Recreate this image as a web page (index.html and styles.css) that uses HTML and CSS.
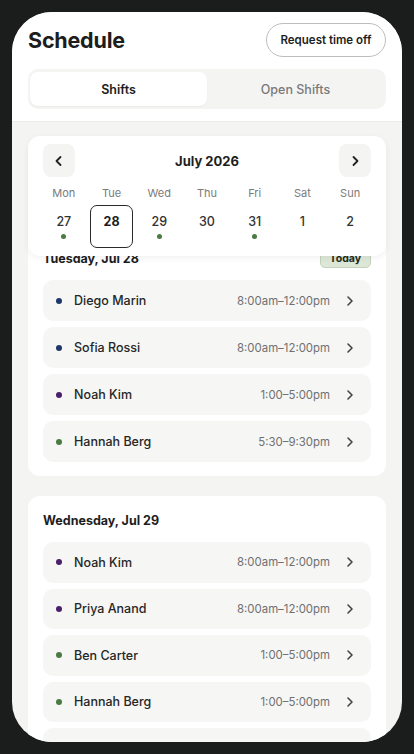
FILE: index.html
```html
<!DOCTYPE html>
<html lang="en">
<head>
    <meta charset="utf-8">
    <link rel="stylesheet" href="styles.css">
</head>
<body>
<div class="phone">
    <header class="top">
        <div class="top-row">
            <h1>Schedule</h1>
            <button class="pill-btn">Request time off</button>
        </div>
        <div class="tabs">
            <button class="tab active">Shifts</button>
            <button class="tab">Open Shifts</button>
        </div>
    </header>
    <main class="feed">
        <section class="calendar">
            <div class="cal-nav">
                <button class="nav-btn">
                    <svg width="12" height="12" viewBox="0 0 12 12"><polyline points="7.5,2 3.5,6 7.5,10" fill="none" stroke="#222" stroke-width="1.8" stroke-linecap="round" stroke-linejoin="round"/></svg>
                </button>
                <div class="cal-title">July 2026</div>
                <button class="nav-btn">
                    <svg width="12" height="12" viewBox="0 0 12 12"><polyline points="4.5,2 8.5,6 4.5,10" fill="none" stroke="#222" stroke-width="1.8" stroke-linecap="round" stroke-linejoin="round"/></svg>
                </button>
            </div>
            <div class="week">
                <span>Mon</span><span>Tue</span><span>Wed</span><span>Thu</span><span>Fri</span><span>Sat</span><span>Sun</span>
            </div>
            <div class="days">
                <div class="day-cell"><span class="num">27</span><span class="mark"></span></div>
                <div class="day-cell selected"><span class="num">28</span></div>
                <div class="day-cell"><span class="num">29</span><span class="mark"></span></div>
                <div class="day-cell"><span class="num">30</span></div>
                <div class="day-cell"><span class="num">31</span><span class="mark"></span></div>
                <div class="day-cell"><span class="num">1</span></div>
                <div class="day-cell"><span class="num">2</span></div>
            </div>
        </section>

        <section class="day">
            <div class="day-head">
                <h2>Tuesday, Jul 28</h2>
                <span class="badge">Today</span>
            </div>
            <div class="shift"><span class="dot navy"></span><span class="name">Diego Marin</span><span class="time">8:00am–12:00pm</span><svg class="chev" width="10" height="12" viewBox="0 0 10 12"><polyline points="3,2 7,6 3,10" fill="none" stroke="#444" stroke-width="1.6" stroke-linecap="round" stroke-linejoin="round"/></svg></div>
            <div class="shift"><span class="dot navy"></span><span class="name">Sofia Rossi</span><span class="time">8:00am–12:00pm</span><svg class="chev" width="10" height="12" viewBox="0 0 10 12"><polyline points="3,2 7,6 3,10" fill="none" stroke="#444" stroke-width="1.6" stroke-linecap="round" stroke-linejoin="round"/></svg></div>
            <div class="shift"><span class="dot purple"></span><span class="name">Noah Kim</span><span class="time">1:00–5:00pm</span><svg class="chev" width="10" height="12" viewBox="0 0 10 12"><polyline points="3,2 7,6 3,10" fill="none" stroke="#444" stroke-width="1.6" stroke-linecap="round" stroke-linejoin="round"/></svg></div>
            <div class="shift"><span class="dot green"></span><span class="name">Hannah Berg</span><span class="time">5:30–9:30pm</span><svg class="chev" width="10" height="12" viewBox="0 0 10 12"><polyline points="3,2 7,6 3,10" fill="none" stroke="#444" stroke-width="1.6" stroke-linecap="round" stroke-linejoin="round"/></svg></div>
        </section>

        <section class="day">
            <div class="day-head">
                <h2>Wednesday, Jul 29</h2>
            </div>
            <div class="shift"><span class="dot purple"></span><span class="name">Noah Kim</span><span class="time">8:00am–12:00pm</span><svg class="chev" width="10" height="12" viewBox="0 0 10 12"><polyline points="3,2 7,6 3,10" fill="none" stroke="#444" stroke-width="1.6" stroke-linecap="round" stroke-linejoin="round"/></svg></div>
            <div class="shift"><span class="dot purple"></span><span class="name">Priya Anand</span><span class="time">8:00am–12:00pm</span><svg class="chev" width="10" height="12" viewBox="0 0 10 12"><polyline points="3,2 7,6 3,10" fill="none" stroke="#444" stroke-width="1.6" stroke-linecap="round" stroke-linejoin="round"/></svg></div>
            <div class="shift"><span class="dot green"></span><span class="name">Ben Carter</span><span class="time">1:00–5:00pm</span><svg class="chev" width="10" height="12" viewBox="0 0 10 12"><polyline points="3,2 7,6 3,10" fill="none" stroke="#444" stroke-width="1.6" stroke-linecap="round" stroke-linejoin="round"/></svg></div>
            <div class="shift"><span class="dot green"></span><span class="name">Hannah Berg</span><span class="time">1:00–5:00pm</span><svg class="chev" width="10" height="12" viewBox="0 0 10 12"><polyline points="3,2 7,6 3,10" fill="none" stroke="#444" stroke-width="1.6" stroke-linecap="round" stroke-linejoin="round"/></svg></div>
            <!-- next row, scrolled out of view -->
            <div class="shift"></div>
        </section>
    </main>
</div>
</body>
</html>
```

FILE: styles.css
```css
body {
    margin: 0;
    padding: 12px;
    background-color: #1b1c1c;
    font-family: Inter, "Noto Sans", sans-serif;
    color: #222;
}
button {
    font-family: inherit;
    cursor: pointer;
}
.phone {
    width: 390px;
    height: 730px;
    border-radius: 40px;
    overflow: hidden;
    background-color: #f4f4f3;
}

/* header */
.top {
    background-color: white;
    padding: 11px 16px 12px;
    border-bottom: 1px solid #ebebea;
}
.top-row {
    display: flex;
    align-items: center;
    justify-content: space-between;
    height: 34px;
}
.top-row h1 {
    margin: 0;
    font-size: 21.5px;
    font-weight: 700;
    letter-spacing: -0.2px;
    color: #1d1d1d;
}
.pill-btn {
    height: 34px;
    width: 120px;
    border: 1px solid #bdbdbd;
    border-radius: 17px;
    background: white;
    font-size: 11.5px;
    font-weight: 600;
    color: #1d1d1d;
    padding: 0;
}
.tabs {
    margin-top: 12px;
    display: flex;
    height: 40px;
    padding: 3px 2px;
    box-sizing: border-box;
    background-color: #f4f4f3;
    border-radius: 10px;
}
.tab {
    flex: 1;
    border: 0;
    border-radius: 8px;
    background: transparent;
    font-size: 12.5px;
    font-weight: 500;
    color: #7a7a7a;
}
.tab.active {
    background-color: white;
    color: #1d1d1d;
    font-weight: 600;
    box-shadow: 0 1px 2px rgba(0, 0, 0, 0.04);
}

/* scrolling feed */
.feed {
    padding: 14px 16px;
    display: flex;
    flex-direction: column;
}
.calendar {
    position: relative;
    z-index: 1;
    margin-bottom: -22px;
    background-color: white;
    border-radius: 12px;
    padding: 8px 12px;
    box-shadow: 0 2px 6px rgba(0, 0, 0, 0.06);
}
.cal-nav {
    display: flex;
    align-items: center;
    justify-content: space-between;
    height: 33px;
    padding: 0 3px;
}
.nav-btn {
    width: 32px;
    height: 33px;
    border: 0;
    border-radius: 8px;
    background-color: #f4f4f3;
    display: flex;
    align-items: center;
    justify-content: center;
    padding: 0;
}
.cal-title {
    font-size: 13px;
    font-weight: 700;
    color: #1d1d1d;
}
.week, .days {
    display: grid;
    grid-template-columns: repeat(7, 1fr);
    text-align: center;
}
.week {
    margin-top: 8px;
    height: 16px;
    line-height: 16px;
    font-size: 11px;
    color: #7a7a7a;
}
.days {
    margin-top: 4px;
}
.day-cell {
    height: 43px;
    width: 43px;
    box-sizing: border-box;
    justify-self: center;
    padding-top: 8px;
    display: flex;
    flex-direction: column;
    align-items: center;
}
.day-cell .num {
    font-size: 12.5px;
    line-height: 18px;
    font-weight: 500;
    color: #333;
}
.day-cell .mark {
    width: 5px;
    height: 5px;
    margin-top: 3px;
    border-radius: 50%;
    background-color: #4b7a43;
}
.day-cell.selected {
    border: 1.6px solid #2a2a2a;
    border-radius: 7px;
    padding-top: 6.5px;
}
.day-cell.selected .num {
    font-weight: 700;
    color: #1d1d1d;
}

/* day cards */
.day {
    background-color: white;
    border-radius: 12px;
    padding: 14px 15px;
    display: flex;
    flex-direction: column;
    gap: 6px;
}
.day + .day {
    margin-top: 20px;
}
.day + .day .shift {
    height: 40.5px;
}
.day-head {
    display: flex;
    align-items: center;
    justify-content: space-between;
    height: 20px;
    margin-bottom: 6px;
}
.day-head h2 {
    margin: 0;
    font-size: 12.5px;
    font-weight: 700;
    color: #1d1d1d;
}
.badge {
    font-size: 10.5px;
    font-weight: 700;
    color: #1f2a1a;
    background-color: #dde7d7;
    border: 1px solid #c4d2bb;
    border-radius: 5px;
    padding: 2px 9px;
}
.shift {
    height: 41px;
    flex-shrink: 0;
    display: flex;
    align-items: center;
    background-color: #f6f6f5;
    border-radius: 10px;
    padding: 0 16px 0 13px;
}
.dot {
    width: 6px;
    height: 6px;
    border-radius: 50%;
    margin-right: 12px;
}
.dot.navy { background-color: #1d3769; }
.dot.purple { background-color: #4a1f6b; }
.dot.green { background-color: #4b7a43; }
.name {
    flex: 1;
    font-size: 12.5px;
    font-weight: 500;
    color: #262626;
}
.time {
    font-size: 11.4px;
    color: #707070;
}
.chev {
    margin-left: 15px;
}
```
